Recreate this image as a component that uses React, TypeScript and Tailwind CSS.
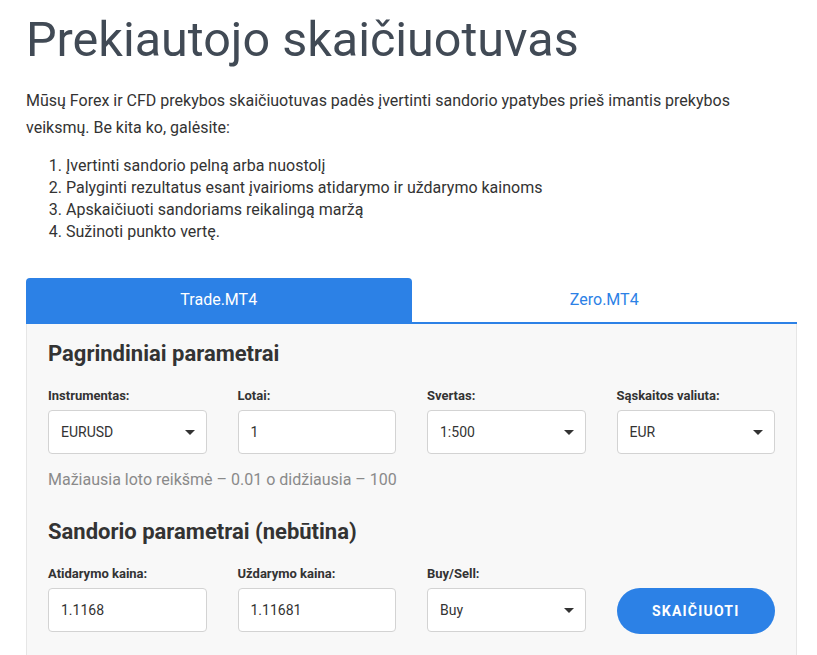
import React from "react";

const Caret = () => (
  <svg width="10" height="5" viewBox="0 0 10 5" className="shrink-0">
    <path d="M0 0 L10 0 L5 5 Z" fill="#333" />
  </svg>
);

const Field = ({ label, value, select }: { label: string; value: string; select?: boolean }) => (
  <div className="flex flex-col">
    <div className="text-[13px] leading-[16px] font-bold text-[#333] mb-[6px]">{label}</div>
    <div className="h-[44px] bg-white border border-[#d3d3d3] rounded-[4px] flex items-center justify-between pl-[12px] pr-[11px] text-[14px] text-[#333]">
      <span>{value}</span>
      {select && <Caret />}
    </div>
  </div>
);

export default function App() {
  return (
    <div className="bg-white min-h-screen font-['Roboto',sans-serif] pl-[26px] pr-[20px] pt-[11px] text-[#333]">
      <h1 className="text-[48.5px] leading-[58px] font-normal text-[#414a55]">Prekiautojo skaičiuotuvas</h1>
      <p className="mt-[18px] text-[16px] leading-[27px] text-[#333]">
        Mūsų Forex ir CFD prekybos skaičiuotuvas padės įvertinti sandorio ypatybes prieš imantis prekybos veiksmų. Be kita ko, galėsite:
      </p>
      <ol className="mt-[14px] list-decimal list-outside pl-[40px] text-[16px] leading-[22px] text-[#333]">
        <li>Įvertinti sandorio pelną arba nuostolį</li>
        <li>Palyginti rezultatus esant įvairioms atidarymo ir uždarymo kainoms</li>
        <li>Apskaičiuoti sandoriams reikalingą maržą</li>
        <li>Sužinoti punkto vertę.</li>
      </ol>

      <div className="mt-[35px] flex border-b-2 border-[#2c81e6]">
        <div className="flex-1 h-[44px] bg-[#2c81e6] rounded-t-[4px] flex items-center justify-center text-white text-[16px]">
          Trade.MT4
        </div>
        <div className="flex-1 h-[44px] flex items-center justify-center text-[#2c81e6] text-[16px]">Zero.MT4</div>
      </div>

      <div className="bg-[#f8f8f8] border-x border-[#e6e6e6] px-[21px] pt-[16px] pb-[40px]">
        <h2 className="text-[22px] leading-[28px] font-bold text-[#333]">Pagrindiniai parametrai</h2>
        <div className="mt-[20px] grid grid-cols-4 gap-x-[31px]">
          <Field label="Instrumentas:" value="EURUSD" select />
          <Field label="Lotai:" value="1" />
          <Field label="Svertas:" value="1:500" select />
          <Field label="Sąskaitos valiuta:" value="EUR" select />
        </div>
        <p className="mt-[14px] text-[16px] leading-[24px] text-[#8a8a8a]">
          Mažiausia loto reikšmė – 0.01 o didžiausia – 100
        </p>
        <h2 className="mt-[26px] text-[22px] leading-[28px] font-bold text-[#333]">Sandorio parametrai (nebūtina)</h2>
        <div className="mt-[20px] grid grid-cols-4 gap-x-[31px]">
          <Field label="Atidarymo kaina:" value="1.1168" />
          <Field label="Uždarymo kaina:" value="1.11681" />
          <Field label="Buy/Sell:" value="Buy" select />
          <div className="flex flex-col pt-[22px]">
            <button className="h-[46px] rounded-full bg-[#2c81e6] text-white text-[14px] font-bold tracking-[1.2px]">
              SKAIČIUOTI
            </button>
          </div>
        </div>
      </div>
    </div>
  );
}
